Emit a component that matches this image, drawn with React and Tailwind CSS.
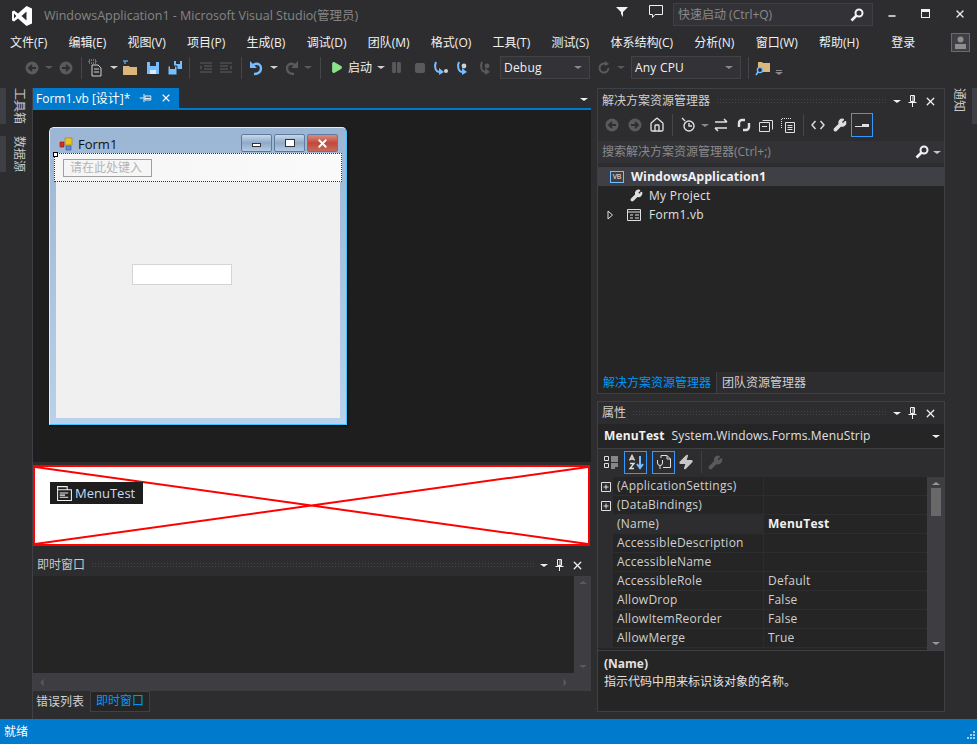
import { Play, Pause, Square, Home, Wrench, X, Minus, Zap } from 'lucide-react';

const MENUS = ['文件(F)', '编辑(E)', '视图(V)', '项目(P)', '生成(B)', '调试(D)', '团队(M)', '格式(O)', '工具(T)', '测试(S)', '体系结构(C)', '分析(N)', '窗口(W)', '帮助(H)'];

const PROPS = [
  ['(ApplicationSettings)', '', 'plus'],
  ['(DataBindings)', '', 'plus'],
  ['(Name)', 'MenuTest', 'name'],
  ['AccessibleDescription', ''],
  ['AccessibleName', ''],
  ['AccessibleRole', 'Default'],
  ['AllowDrop', 'False'],
  ['AllowItemReorder', 'False'],
  ['AllowMerge', 'True'],
];

function Caret({ className = 'border-t-[#8a8a8e]' }) {
  return <span className={`inline-block w-0 h-0 border-x-[4px] border-x-transparent border-t-[3px] ${className}`} />;
}

function Sep() {
  return <div className="w-px h-[22px] bg-[#46464a] mx-[5px] shrink-0" />;
}

function Magnifier({ className = '' }) {
  return (
    <svg width="14" height="14" viewBox="0 0 14 14" fill="none" className={className}>
      <circle cx="9" cy="5" r="3.500" stroke="#f1f1f1" strokeWidth="2" />
      <path d="M6.500 7.500L1.500 12.500" stroke="#f1f1f1" strokeWidth="2.600" />
    </svg>
  );
}

function PinIcon({ className = '' }) {
  return (
    <svg width="11" height="12" viewBox="0 0 11 12" fill="none" stroke="#f1f1f1" className={className}>
      <path d="M3.500.5h4v6h-4zM6 1v5.500M1.500 7.500h8M5.500 8v4" />
    </svg>
  );
}

function CircleArrow({ flip }) {
  return (
    <svg width="16" height="16" viewBox="0 0 16 16" className={flip ? '' : '-scale-x-100'}>
      <circle cx="8" cy="8" r="6.500" fill="#5a5a5d" />
      <path d="M4 8h7M8 5l3 3-3 3" stroke="#2d2d30" strokeWidth="1.800" fill="none" />
    </svg>
  );
}

function NewProject() {
  return (
    <svg width="16" height="18" viewBox="0 0 16 18" fill="none">
      <path d="M4 6h6l3 3v8H4z" stroke="#d0d0d0" />
      <path d="M6 10h5M6 13h5" stroke="#d0d0d0" />
      <path d="M1 1h7v3H1z" stroke="#c9b48a" strokeDasharray="1 1" />
    </svg>
  );
}

function OpenFolder() {
  return (
    <svg width="16" height="16" viewBox="0 0 16 16">
      <path d="M1 6h6l1 1h7v8H1z" fill="#dcb67a" />
      <path d="M3 4V1M3 1H1M3 1l3 0" stroke="#4aa3e8" strokeWidth="1.500" fill="none" />
    </svg>
  );
}

function Save({ size = 14 }) {
  return (
    <svg width={size} height={size} viewBox="0 0 14 14">
      <path d="M1 1h12v12H1z" fill="#75beff" />
      <path d="M4 1h6v4H4z" fill="#2d2d30" />
      <path d="M4 9h6v4H4z" fill="#d8eeff" />
    </svg>
  );
}

function SaveAll() {
  return (
    <svg width="16" height="16" viewBox="0 0 16 16">
      <path d="M7 1h8v8H7z" fill="#75beff" />
      <path d="M9 1h4v3H9z" fill="#2d2d30" />
      <path d="M1 6h9v9H1z" fill="#75beff" stroke="#2d2d30" />
      <path d="M3 6h5v3H3z" fill="#2d2d30" />
    </svg>
  );
}

function IndentIcon({ flip }) {
  return (
    <svg width="14" height="14" viewBox="0 0 14 14" stroke="#5f5f62" fill="none" className={flip ? '-scale-x-100' : ''}>
      <path d="M1 2h12M5 5h8M5 8h8M1 11h12M1 5l2 1.500L1 8" />
    </svg>
  );
}

function Undo({ color = '#75beff', flip }) {
  return (
    <svg width="16" height="16" viewBox="0 0 16 16" fill="none" className={flip ? '-scale-x-100' : ''}>
      <path d="M6 14c4 0 7-2 7-6 0-3-3-5-6-4L3 6" stroke={color} strokeWidth="2.400" />
      <path d="M2 1v7h7" fill={color} />
    </svg>
  );
}

function Step({ dot, dim }) {
  const c = dim ? '#5a5a5d' : '#75beff';
  return (
    <svg width="16" height="16" viewBox="0 0 16 16" fill="none">
      <path d="M3 2C1 6 2 12 7 12" stroke={c} strokeWidth="2" />
      <path d="M6 8l5 4-5 3z" fill={c} />
      {dot ? <circle cx="13" cy="11" r="2" fill="#d0d0d0" /> : <circle cx="8" cy="6" r="2.400" fill={dim ? '#5a5a5d' : '#d0d0d0'} />}
    </svg>
  );
}

function FindFolder() {
  return (
    <svg width="16" height="16" viewBox="0 0 16 16">
      <path d="M3 2h4l1 1h7v9H3z" fill="#dcb67a" />
      <circle cx="5" cy="10" r="2.600" fill="#2d2d30" stroke="#75beff" strokeWidth="1.400" />
      <path d="M3 12l-2 3" stroke="#75beff" strokeWidth="1.600" />
    </svg>
  );
}

function Combo({ width, label }) {
  return (
    <div className={`${width} h-[23px] flex items-center justify-between pl-[3px] pr-[7px] bg-[#333337] border border-[#434346] text-[#f1f1f1] tracking-[0.2px] shrink-0`}>
      <span>{label}</span>
      <Caret />
    </div>
  );
}

function Grip() {
  return <div className="flex-1 h-[6px] mx-[6px] bg-[radial-gradient(#444448_1px,transparent_1px)] bg-[length:3px_3px]" />;
}

function PanelHead({ title, className = 'h-[22px]' }) {
  return (
    <div className={`${className} shrink-0 flex items-center pl-[4px] pr-[7px] text-[#d0d0d0] bg-[#2d2d30]`}>
      <span>{title}</span>
      <Grip />
      <Caret className="border-t-[#f1f1f1]" />
      <PinIcon className="ml-[6px]" />
      <X size={13} strokeWidth={2.400} className="ml-[6px] text-[#f1f1f1]" />
    </div>
  );
}

function SideTab({ label }) {
  return (
    <div className="h-[36px] w-[32px] flex">
      <div className="w-[6px] bg-[#3f3f46]" />
      <div className="flex-1 flex justify-center">
        <span className="whitespace-nowrap text-[#c8c8c8] text-[12px] leading-[14px] [writing-mode:vertical-rl] [text-orientation:sideways]">{label}</span>
      </div>
    </div>
  );
}

function FormButton({ red, children }) {
  return (
    <div className={`w-[31px] h-[18px] rounded-[2px] border border-[#5f7a9c] flex items-center justify-center ${red ? 'bg-gradient-to-b from-[#d98c80] via-[#c2483a] to-[#c96a5c]' : 'bg-gradient-to-b from-[#c8d8ea] via-[#8fa9c8] to-[#b4cbe2]'}`}>
      {children}
    </div>
  );
}

function FormDesigner() {
  return (
    <div className="w-[298px] h-[298px] ml-[16px] mt-[17px] flex flex-col bg-gradient-to-b from-[#9bb5d4] to-[#b9d1ea] rounded-t-[5px] border border-[#e4eef8] border-b-[#3cc7ff] border-r-[#3cc7ff] shadow-[1px_1px_2px_#000] relative">
      <div className="h-[25px] pt-[5px] shrink-0 flex items-center pl-[9px] pr-[8px] text-[#111] text-[13px]">
        <svg width="14" height="14" viewBox="0 0 14 14" className="mr-[5px] mt-px">
          <path d="M6 1h7v7H6z" fill="#f0c020" stroke="#a07810" strokeWidth=".6" />
          <path d="M1 5h4v5H1z" fill="#d83020" stroke="#801810" strokeWidth=".6" />
          <path d="M7 9h5v4H7z" fill="#5a8fe0" stroke="#305090" strokeWidth=".6" />
        </svg>
        <span className="flex-1 mt-px">Form1</span>
        <div className="flex gap-[2px]">
          <FormButton><div className="w-[9px] h-[4px] border border-[#333] bg-white mt-[4px]" /></FormButton>
          <FormButton><div className="w-[10px] h-[8px] border border-[#333] bg-white" /></FormButton>
          <FormButton red><X size={13} strokeWidth={3.400} className="text-white" /></FormButton>
        </div>
      </div>
      <div className="flex-1 mx-[6px] mb-[6px] bg-[#f0f0f0] flex flex-col relative">
        <div className="h-[29px] shrink-0 -mx-[2px] border border-dotted border-[#333] bg-gradient-to-r from-[#f5f5f5] to-[#fafafa] flex items-center pl-[8px]">
          <div className="w-[89px] h-[18px] border border-[#a0a0a0] pl-[6px] text-[12px] leading-[16px] text-[#b4b4b4]">请在此处键入</div>
        </div>
        <div className="absolute -left-[3px] -top-[1px] w-[5px] h-[5px] bg-white border border-black" />
        <div className="absolute left-[76px] top-[111px] w-[100px] h-[21px] bg-white border border-[#d4d4d4]" />
      </div>
    </div>
  );
}

function Tray() {
  return (
    <div className="h-[81px] shrink-0 mt-[3px] mr-px bg-white border-2 border-[#ff0000] relative">
      <svg className="absolute inset-0 w-full h-full" preserveAspectRatio="none" viewBox="0 0 100 100">
        <path d="M0 0L100 100M0 100L100 0" stroke="#ff0000" strokeWidth="2" vectorEffect="non-scaling-stroke" />
      </svg>
      <div className="absolute left-[15px] top-[15px] w-[93px] h-[22px] bg-[#1e1e1e] flex items-center pl-[6px] text-[#c6dcf5] text-[13px]">
        <svg width="17" height="17" viewBox="0 0 16 16" fill="none" stroke="#f1f1f1" className="mr-[2px]">
          <path d="M1.500 1.500h9v3h4v10h-13zM1.500 4.500h9M3.500 7.500h8M3.500 9.500h5M3.500 11.500h8" />
        </svg>
        MenuTest
      </div>
    </div>
  );
}

function PropRow({ name, value, kind }) {
  return (
    <div className="h-[19px] flex tracking-[0.25px]">
      <div className="w-[15px] shrink-0 flex items-center justify-center bg-[#2d2d30]">
        {kind === 'plus' && (
          <svg width="10" height="10" viewBox="0 0 10 10" fill="none" stroke="#e0e0e0">
            <path d="M.5.5h9v9h-9zM2.500 5h5M5 2.500v5" />
          </svg>
        )}
      </div>
      <div className={`w-[150px] shrink-0 pl-[4px] border-b border-[#2d2d30] ${kind === 'name' ? 'bg-[#2d2d30]' : ''}`}>{name}</div>
      <div className={`flex-1 pl-[4px] border-l border-b border-[#2d2d30] ${kind === 'name' ? 'font-bold text-[#f1f1f1]' : ''}`}>{value}</div>
    </div>
  );
}

export default function App() {
  return (
    <div className="w-[977px] h-[744px] overflow-hidden flex flex-col bg-[#2d2d30] text-[#f1f1f1] text-[12px] leading-[18px] font-['Open_Sans','Noto_Sans_CJK_SC',sans-serif]">
      {/* Title bar */}
      <div className="h-[30px] shrink-0 flex items-center pl-[11px]">
        <svg width="22" height="22" viewBox="0 0 22 22" className="mt-[2px]">
          <path d="M15.500 1L21 3.500v15L15.500 21 7 13.500 3 16.500 1 15.500v-9l2-1 4 3zM15.500 6.500L10.500 11l5 4.500zM3 8.500v5l2.400-2.500z" fill="#fff" fillRule="evenodd" />
        </svg>
        <span className="ml-[11px] text-[12.5px] mt-px text-[#858585]">WindowsApplication1 - Microsoft Visual Studio(管理员)</span>
        <div className="flex-1" />
        <svg width="12" height="12" viewBox="0 0 12 12" className="mr-[20px] -mt-[6px]"><path d="M0 1h12L7 6v5L5 8V6z" fill="#f1f1f1" /></svg>
        <svg width="16" height="16" viewBox="0 0 16 16" fill="none" stroke="#f1f1f1" className="mr-[9px] -mt-[6px]"><path d="M1.500 1.500h13v9H7L4.500 13.500v-3h-3z" /></svg>
        <div className="w-[200px] h-[23px] -mt-[1px] bg-[#333337] border border-[#3f3f46] flex items-center justify-between pl-[4px] pr-[8px] text-[#8a8a8a]">
          <span>快速启动 (Ctrl+Q)</span>
          <Magnifier />
        </div>
        <Minus size={10} strokeWidth={4} className="ml-[14px] mt-[1px] text-[#f1f1f1]" />
        <div className="ml-[24px] -mt-[3px] w-[9px] h-[9px] border border-t-[3px] border-[#f1f1f1]" />
        <X size={12} strokeWidth={2.600} className="ml-[24px] mr-[11px] -mt-[3px] text-[#f1f1f1]" />
      </div>

      {/* Menu bar */}
      <div className="h-[24px] pt-[1px] shrink-0 flex items-center pl-[10px] gap-[21.25px] text-[#f1f1f1]">
        {MENUS.map(m => <span key={m} className="whitespace-nowrap">{m}</span>)}
        <span className="ml-[11px]">登录</span>
        <div className="ml-[14px] w-[19px] h-[19px] border border-[#6a6a6a] bg-[#3f3f46] flex items-center justify-center">
          <svg width="13" height="13" viewBox="0 0 13 13"><circle cx="6.500" cy="3.500" r="3" fill="#8e8e8e" /><path d="M1 13V8h11v5z" fill="#8e8e8e" /></svg>
        </div>
      </div>

      {/* Toolbar */}
      <div className="h-[27px] shrink-0 flex items-center pl-[24px]">
        <CircleArrow />
        <div className="w-[18px] flex justify-center"><Caret className="border-t-[#5a5a5d]" /></div>
        <CircleArrow flip />
        <div className="w-[2px]" />
        <Sep />
        <div className="w-[18px] flex justify-center"><NewProject /></div>
        <div className="w-[17px] flex justify-center"><Caret className="border-t-[#d0d0d0]" /></div>
        <OpenFolder />
        <div className="w-[8px]" />
        <Save />
        <div className="w-[7px]" />
        <SaveAll />
        <div className="w-px" />
        <Sep />
        <div className="w-[20px] ml-px flex justify-center"><IndentIcon /></div>
        <div className="w-[20px] flex justify-center"><IndentIcon flip /></div>
        <Sep />
        <div className="w-px" />
        <Undo />
        <div className="w-[19px] flex justify-center"><Caret className="border-t-[#d0d0d0]" /></div>
        <div className="w-px" />
        <Undo color="#5a5a5d" flip />
        <div className="w-[14px] ml-px flex justify-center"><Caret className="border-t-[#5a5a5d]" /></div>
        <Sep />
        <Play size={13} className="ml-[4px] mr-[5px] text-[#8ae28a] fill-[#8ae28a]" />
        <span>启动</span>
        <div className="w-[18px] flex justify-center"><Caret className="border-t-[#d0d0d0]" /></div>
        <Pause size={13} className="text-[#5a5a5d] fill-[#5a5a5d]" />
        <div className="w-[11px]" />
        <Square size={12} className="text-[#5a5a5d] fill-[#5a5a5d]" />
        <div className="w-[7px]" />
        <Step dot />
        <div className="w-[7px]" />
        <Step />
        <div className="w-[7px]" />
        <Step dim />
        <div className="w-[5px]" />
        <Combo width="w-[90px]" label="Debug" />
        <svg width="16" height="16" viewBox="0 0 16 16" fill="none" className="ml-[6px]">
          <path d="M12.500 8a4.500 4.500 0 1 1-2-3.700" stroke="#5a5a5d" strokeWidth="2" />
          <path d="M9 1l4 3-4 2z" fill="#5a5a5d" />
        </svg>
        <div className="w-[17px] flex justify-center"><Caret className="border-t-[#5a5a5d]" /></div>
        <div className="w-[2px]" />
        <Combo width="w-[110px]" label="Any CPU" />
        <div className="w-[2px]" />
        <Sep />
        <div className="ml-px"><FindFolder /></div>
        <div className="ml-[4px] mt-[10px] flex flex-col items-center gap-[1px]">
          <div className="w-[6px] h-px bg-[#8a8a8e]" />
          <Caret />
        </div>
      </div>

      {/* Workspace */}
      <div className="h-[631px] shrink-0 mt-[7px] flex">
        <div className="w-[32px] shrink-0 flex flex-col gap-[12px]">
          <SideTab label="工具箱" />
          <SideTab label="数据源" />
        </div>

        {/* Document column */}
        <div className="w-[559px] shrink-0 flex flex-col border-l border-[#3f3f46]">
          <div className="h-[20px] shrink-0 flex items-center">
            <div className="w-[146px] h-full bg-[#007acc] flex items-center pl-[3px] text-white text-[12px]">
              <span className="flex-1 mt-px">Form1.vb [设计]*</span>
              <PinIcon className="mr-[9px] rotate-90" />
              <X size={12} strokeWidth={2.200} className="mr-[7px]" />
            </div>
            <div className="flex-1" />
            <Caret className="border-t-[#f1f1f1] mr-[3px] mt-[3px]" />
          </div>
          <div className="h-[2px] shrink-0 bg-[#007acc]" />
          <div className="h-[352px] shrink-0 bg-[#1e1e1e] overflow-hidden">
            <FormDesigner />
          </div>
          <Tray />
          <div className="h-[8px] shrink-0" />
          <div className="h-[22px] shrink-0 flex items-center pl-[4px] pr-[7px] text-[#c8c8c8]">
            <span>即时窗口</span>
            <Grip />
            <Caret className="border-t-[#f1f1f1]" />
            <PinIcon className="ml-[6px]" />
            <X size={13} strokeWidth={2.400} className="ml-[6px] text-[#f1f1f1]" />
          </div>
          <div className="h-[115px] shrink-0 flex flex-col bg-[#252526]">
            <div className="flex-1 flex">
              <div className="flex-1" />
              <div className="w-[17px] bg-[#3e3e42] flex flex-col justify-between items-center py-[5px]">
                <Caret className="border-t-[#5a5a5d] rotate-180" />
                <Caret className="border-t-[#5a5a5d]" />
              </div>
            </div>
            <div className="h-[18px] shrink-0 bg-[#3e3e42] flex items-center justify-between px-[5px]">
              <Caret className="border-t-[#5a5a5d] rotate-90" />
              <Caret className="border-t-[#5a5a5d] -rotate-90 mr-[17px]" />
            </div>
          </div>
          <div className="h-[21px] shrink-0 flex items-center text-[#d0d0d0]">
            <span className="pl-[3px] pr-[6px]">错误列表</span>
            <span className="h-[21px] px-[5px] bg-[#252526] border border-[#3f3f46] text-[#0097fb]">即时窗口</span>
          </div>
        </div>

        <div className="w-[6px] shrink-0" />

        {/* Tool windows */}
        <div className="w-[348px] shrink-0 flex flex-col pb-[7px]">
          <div className="h-[306px] shrink-0 flex flex-col border border-[#3f3f46]">
            <PanelHead title="解决方案资源管理器" className="h-[23px] pt-px" />
            <div className="h-[26px] shrink-0 flex items-center pl-[6px]">
              <CircleArrow />
              <div className="w-[7px]" />
              <CircleArrow flip />
              <Home size={16} className="ml-[6px] text-[#e0e0e0]" />
              <div className="w-[2px]" />
              <Sep />
              <svg width="20" height="16" viewBox="0 0 20 16" fill="none" stroke="#e0e0e0" strokeWidth="1.400" className="ml-[2px]">
                <circle cx="9" cy="9" r="5" />
                <path d="M9 6v3h3M2 1l3 3" />
              </svg>
              <div className="w-[10px] flex justify-center"><Caret /></div>
              <svg width="18" height="16" viewBox="0 0 18 16" fill="none" stroke="#e0e0e0" strokeWidth="1.600" className="ml-[2px]">
                <path d="M3 5h12M12 2l3 3M15 11H3M6 14l-3-3" />
              </svg>
              <svg width="16" height="16" viewBox="0 0 16 16" fill="none" stroke="#e0e0e0" strokeWidth="2.400" className="ml-[6px]">
                <path d="M3 10V6a3 3 0 0 1 3-3h3M13 6v4a3 3 0 0 1-3 3H7" />
              </svg>
              <svg width="16" height="16" viewBox="0 0 16 16" fill="none" stroke="#e0e0e0" className="ml-[6px]">
                <path d="M1.500 5.500h10v9h-10zM4.500 3.500h10v9M4 9.500h5" />
              </svg>
              <svg width="16" height="16" viewBox="0 0 16 16" fill="none" stroke="#e0e0e0" className="ml-[6px]">
                <path d="M5.500 5.500h9v10h-9zM7.500 8.500h5M7.500 10.500h5M7.500 12.500h5" />
                <path d="M1.500 11V1.500H11" strokeDasharray="1 1" />
              </svg>
              <div className="w-[2px]" />
              <Sep />
              <svg width="14" height="12" viewBox="0 0 14 12" fill="none" stroke="#e0e0e0" strokeWidth="1.400" className="ml-[2px]">
                <path d="M4.500 2L1 6l3.500 4M9.500 2L13 6l-3.500 4" />
              </svg>
              <Wrench size={14} className="ml-[8px] text-[#e0e0e0] fill-[#e0e0e0]" />
              <div className="ml-[4px] w-[22px] h-[24px] border border-[#3399ff] flex items-center justify-center">
                <div className="flex items-center">
                  <div className="w-[7px] h-px bg-[#e0e0e0] mt-[3px]" />
                  <div className="w-[7px] h-[3px] bg-[#e0e0e0]" />
                </div>
              </div>
            </div>
            <div className="h-[3px] shrink-0" />
            <div className="h-[22px] shrink-0 flex items-center bg-[#333337] text-[#8a8a8a] pl-[4px]">
              <span className="flex-1">搜索解决方案资源管理器(Ctrl+;)</span>
              <Magnifier className="mr-[4px]" />
              <Caret className="border-t-[#c8c8c8] mr-[3px]" />
            </div>
            <div className="h-[4px] shrink-0" />
            <div className="flex-1 bg-[#252526] flex flex-col">
              <div className="h-[19px] shrink-0 bg-[#3f3f46] flex items-center pl-[12px] font-bold text-[12.5px]">
                <div className="w-[14px] h-[12px] border border-[#75beff] text-[7px] leading-[10px] text-center font-normal mr-[7px]">VB</div>
                WindowsApplication1
              </div>
              <div className="h-[19px] shrink-0 flex items-center pl-[32px] text-[#e0e0e0] tracking-[0.25px]">
                <Wrench size={13} className="mr-[6px] text-[#e0e0e0] fill-[#e0e0e0]" />
                My Project
              </div>
              <div className="h-[19px] shrink-0 flex items-center pl-[9px] text-[#e0e0e0] tracking-[0.25px]">
                <svg width="7" height="10" viewBox="0 0 7 10" fill="none" stroke="#e0e0e0" className="mr-[13px]"><path d="M1 1l4.500 4L1 9z" /></svg>
                <svg width="14" height="12" viewBox="0 0 14 12" fill="none" stroke="#e0e0e0" className="mr-[8px]"><path d="M.5.5h13v11H.5zM.5 3h13M3 6h3M3 9h3M8 6h4M8 9h4" /></svg>
                Form1.vb
              </div>
            </div>
            <div className="h-[21px] shrink-0 flex items-center bg-[#2d2d30] text-[#d0d0d0]">
              <span className="h-full flex items-center px-[5px] bg-[#252526] text-[#0097fb]">解决方案资源管理器</span>
              <span className="h-full flex items-center pl-[5px] border-l border-[#3f3f46]">团队资源管理器</span>
            </div>
          </div>

          <div className="h-[7px] shrink-0" />

          <div className="flex-1 flex flex-col border border-[#3f3f46]">
            <PanelHead title="属性" />
            <div className="h-[24px] shrink-0 flex items-center bg-[#252526] pl-[6px] pr-[4px] text-[#e0e0e0] tracking-[0.15px]">
              <span className="font-bold text-[#f1f1f1] mr-[7px]">MenuTest</span>
              <span className="flex-1">System.Windows.Forms.MenuStrip</span>
              <Caret className="border-t-[#f1f1f1]" />
            </div>
            <div className="h-[29px] pb-[2px] shrink-0 flex items-center pl-[5px] border-t border-[#3f3f46]">
              <svg width="16" height="16" viewBox="0 0 16 16" fill="none" stroke="#e0e0e0"><path d="M1.500 2.500h4v4h-4zM1.500 9.500h4v4h-4zM8 3h7M8 5h7M8 7h7M8 10h7M8 12h7M8 14h4" /></svg>
              <div className="ml-[5px] w-[23px] h-[23px] border border-[#3399ff] flex items-center justify-center">
                <svg width="16" height="16" viewBox="0 0 16 16" fill="none" strokeWidth="1.400">
                  <path d="M1.500 6.500l2.500-5 2.500 5M2.500 5h3M2 9.500h4l-4 5h4" stroke="#e0e0e0" />
                  <path d="M12 2v11M9 10l3 4 3-4" stroke="#75beff" strokeWidth="2" />
                </svg>
              </div>
              <div className="ml-[5px] w-[23px] h-[23px] border border-[#3399ff] flex items-center justify-center">
                <svg width="16" height="16" viewBox="0 0 16 16" fill="none" stroke="#e0e0e0">
                  <path d="M5 4V1.500h6l3.500 3.500v8.500H7M11 1.500V5h3.500M1.500 6v3a2.500 2.500 0 0 0 5 0V6M4 11.500V15" />
                </svg>
              </div>
              <Zap size={16} className="ml-[3px] text-[#c8c8c8] fill-[#c8c8c8]" />
              <div className="w-px h-[22px] bg-[#3f3f46] ml-[7px]" />
              <Wrench size={15} className="ml-[6px] text-[#5a5a5d] fill-[#5a5a5d]" />
            </div>
            <div className="h-[173px] shrink-0 flex bg-[#252526] text-[#d0d0d0]">
              <div className="flex-1 flex flex-col">
                {PROPS.map(p => <PropRow key={p[0]} name={p[0]} value={p[1]} kind={p[2]} />)}
              </div>
              <div className="w-[17px] shrink-0 bg-[#3e3e42] flex flex-col items-center py-[5px]">
                <Caret className="border-t-[#999] rotate-180" />
                <div className="w-[10px] h-[28px] mt-[3px] bg-[#686868]" />
                <div className="flex-1" />
                <Caret className="border-t-[#999]" />
              </div>
            </div>
            <div className="flex-1 bg-[#252526] border-t border-[#3f3f46] pl-[6px] pt-[4px] text-[#e0e0e0]">
              <div className="font-bold">(Name)</div>
              <div>指示代码中用来标识该对象的名称。</div>
            </div>
          </div>
        </div>

        <div className="flex-1 flex">
          <div className="flex-1 flex justify-center">
            <span className="h-[26px] whitespace-nowrap text-[#c8c8c8] text-[12px] leading-[14px] [writing-mode:vertical-rl] [text-orientation:sideways]">通知</span>
          </div>
          <div className="w-[5px] h-[36px] bg-[#3f3f46]" />
        </div>
      </div>

      {/* Status bar */}
      <div className="flex-1 flex items-center justify-between bg-[#007acc] pl-[4px] pr-[2px] text-white">
        <span>就绪</span>
        <svg width="10" height="10" viewBox="0 0 10 10" fill="#9fd0ef" className="self-end mb-[3px]">
          <path d="M8 0h2v2H8zM5 3h2v2H5zM8 3h2v2H8zM2 6h2v2H2zM5 6h2v2H5zM8 6h2v2H8z" />
        </svg>
      </div>
    </div>
  );
}
